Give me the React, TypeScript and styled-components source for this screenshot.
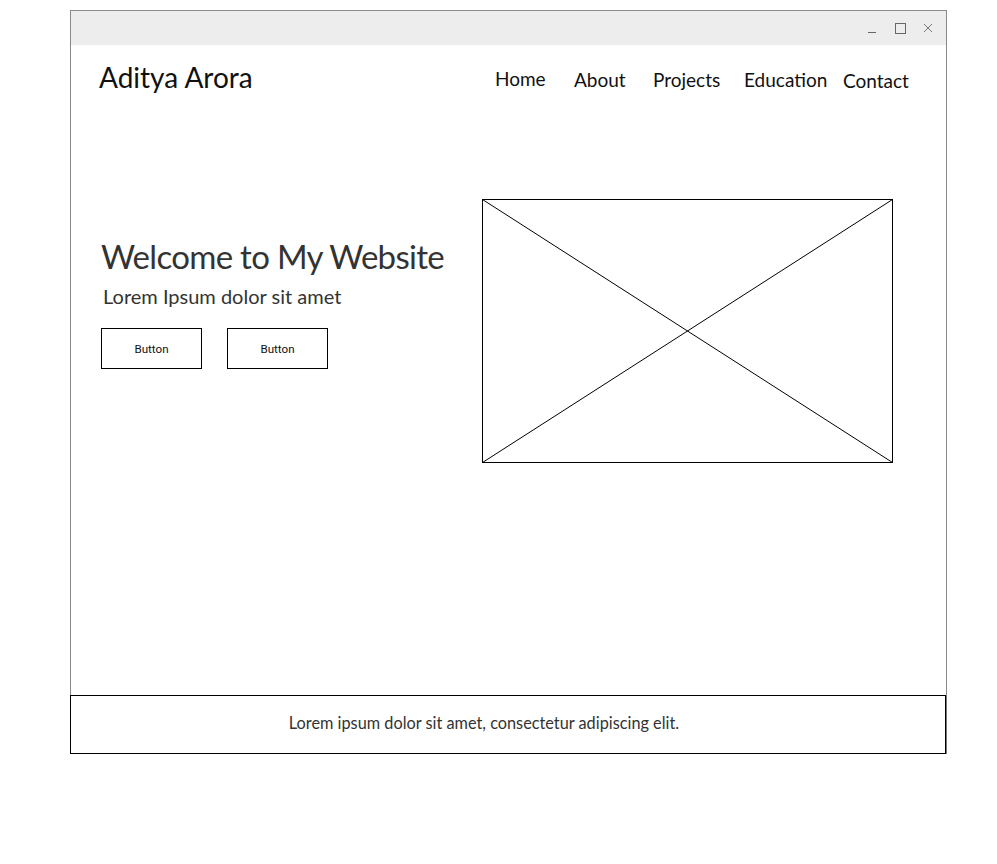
import React from "react";
import styled, { createGlobalStyle } from "styled-components";

const Global = createGlobalStyle`
  html, body { margin: 0; padding: 0; background: #fff; }
  body { font-family: "Lato", "Noto Sans", sans-serif; }
`;

const Page = styled.div`
  padding: 10px 0 0 70px;
`;

const Window = styled.div`
  width: 877px;
  height: 744px;
  box-sizing: border-box;
  border: 1px solid #8a8a8a;
  border-bottom: none;
  display: flex;
  flex-direction: column;
`;

const TitleBar = styled.div`
  height: 34px;
  background: #ededed;
  display: flex;
  justify-content: flex-end;
  align-items: center;
  gap: 14px;
  padding-right: 11px;
`;

const Ctrl = styled.svg`
  width: 14px;
  height: 14px;
  display: block;
`;

const Header = styled.header`
  display: flex;
  align-items: flex-start;
  justify-content: space-between;
  padding: 15px 38px 0 28px;
`;

const Logo = styled.div`
  font-size: 28px;
  color: #111;
  line-height: 34px;
`;

const Nav = styled.nav`
  display: flex;
  align-items: flex-start;
  padding-top: 7px;
`;

const NavItem = styled.a<{ $w: number; $dy?: number }>`
  width: ${(p) => p.$w}px;
  font-size: 19px;
  color: #111;
  text-decoration: none;
  line-height: 24px;
  margin-top: ${(p) => p.$dy ?? 0}px;
`;

const Hero = styled.section`
  display: flex;
  align-items: flex-start;
  padding: 105px 0 0 30px;
`;

const HeroText = styled.div`
  width: 381px;
  padding-top: 35px;
`;

const Title = styled.h1`
  margin: 0;
  font-weight: 400;
  font-size: 33px;
  letter-spacing: -0.7px;
  line-height: 44px;
  color: #333;
`;

const Subtitle = styled.p`
  margin: 4px 0 0 2px;
  font-size: 20px;
  line-height: 28px;
  color: #333;
`;

const Buttons = styled.div`
  display: flex;
  gap: 25px;
  margin-top: 18px;
`;

const Btn = styled.button`
  width: 101px;
  height: 41px;
  box-sizing: border-box;
  border: 1px solid #000;
  background: #fff;
  font-family: Roboto, "Liberation Sans", sans-serif;
  font-size: 11.6px;
  color: #111;
  padding: 0;
`;

const Placeholder = styled.svg`
  width: 411px;
  height: 264px;
  display: block;
`;

const Spacer = styled.div`
  flex: 1;
`;

const Footer = styled.footer`
  width: 876px;
  height: 59px;
  box-sizing: border-box;
  border: 1px solid #000;
  box-shadow: 1px 1px 0 #777;
  display: flex;
  align-items: center;
  justify-content: center;
  margin-left: -1px;
  padding-bottom: 5px;
  font-size: 16.3px;
  color: #333;
`;

const FooterText = styled.span`
  margin-left: -48px;
`;

export default function App() {
  return (
    <>
      <Global />
      <Page>
        <Window>
          <TitleBar>
            <Ctrl viewBox="0 0 14 14">
              <line x1="3" y1="11.5" x2="11" y2="11.5" stroke="#666" strokeWidth="1" />
            </Ctrl>
            <Ctrl viewBox="0 0 14 14">
              <rect x="2.5" y="2.5" width="10" height="10" fill="none" stroke="#666" strokeWidth="1" />
            </Ctrl>
            <Ctrl viewBox="0 0 14 14">
              <path d="M3 3 L11 11 M11 3 L3 11" stroke="#777" strokeWidth="1" />
            </Ctrl>
          </TitleBar>
          <Header>
            <Logo>Aditya Arora</Logo>
            <Nav>
              <NavItem $w={79} href="#">Home</NavItem>
              <NavItem $w={79} $dy={1} href="#">About</NavItem>
              <NavItem $w={91} $dy={1} href="#">Projects</NavItem>
              <NavItem $w={99} $dy={1} href="#">Education</NavItem>
              <NavItem $w={65} $dy={2} href="#">Contact</NavItem>
            </Nav>
          </Header>
          <Hero>
            <HeroText>
              <Title>Welcome to My Website</Title>
              <Subtitle>Lorem Ipsum dolor sit amet</Subtitle>
              <Buttons>
                <Btn>Button</Btn>
                <Btn>Button</Btn>
              </Buttons>
            </HeroText>
            <Placeholder viewBox="0 0 411 264">
              <rect x="0.5" y="0.5" width="410" height="263" fill="#fff" stroke="#000" strokeWidth="1" />
              <line x1="0.5" y1="0.5" x2="410.5" y2="263.5" stroke="#000" strokeWidth="1" />
              <line x1="410.5" y1="0.5" x2="0.5" y2="263.5" stroke="#000" strokeWidth="1" />
            </Placeholder>
          </Hero>
          <Spacer />
          <Footer>
            <FooterText>Lorem ipsum dolor sit amet, consectetur adipiscing elit.</FooterText>
          </Footer>
        </Window>
      </Page>
    </>
  );
}
